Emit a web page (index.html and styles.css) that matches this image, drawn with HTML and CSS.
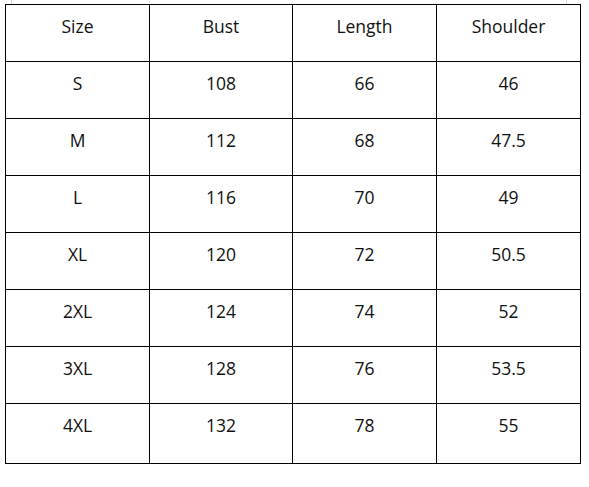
FILE: index.html
```html
<!DOCTYPE html>
<html>
<head>
<meta charset="utf-8">
<link rel="stylesheet" href="styles.css">
</head>
<body>
<div class="stub"></div>
<table class="sizes">
  <colgroup>
    <col class="c1"><col class="c2"><col class="c3"><col class="c4">
  </colgroup>
  <tr><td>Size</td><td>Bust</td><td>Length</td><td>Shoulder</td></tr>
  <tr><td>S</td><td>108</td><td>66</td><td>46</td></tr>
  <tr><td>M</td><td>112</td><td>68</td><td>47.5</td></tr>
  <tr><td>L</td><td>116</td><td>70</td><td>49</td></tr>
  <tr><td>XL</td><td>120</td><td>72</td><td>50.5</td></tr>
  <tr><td>2XL</td><td>124</td><td>74</td><td>52</td></tr>
  <tr><td>3XL</td><td>128</td><td>76</td><td>53.5</td></tr>
  <tr class="last"><td>4XL</td><td>132</td><td>78</td><td>55</td></tr>
</table>
</body>
</html>
```
FILE: styles.css
```css
html, body {
  margin: 0;
  padding: 0;
  background: #fff;
}
body {
  font-family: "Open Sans", "Liberation Sans", sans-serif;
  color: #000;
}
.stub {
  height: 4px;
  margin-left: 11px;
  width: 554px;
  border-left: 1px solid #d9d9d9;
  border-right: 1px solid #d9d9d9;
}
.sizes {
  margin-left: 5px;
  border-collapse: collapse;
  table-layout: fixed;
  width: 576px;
}
.c1 { width: 144px; }
.c2 { width: 143px; }
.c3 { width: 144px; }
.c4 { width: 144px; }
.sizes td {
  border: 1px solid #000;
  height: 57px;
  box-sizing: border-box;
  padding: 9px 0 0;
  vertical-align: top;
  text-align: center;
  font-size: 17.5px;
  font-weight: 500;
  line-height: 24px;
  color: #111;
}
.sizes tr.last td {
  height: 60px;
}
```
